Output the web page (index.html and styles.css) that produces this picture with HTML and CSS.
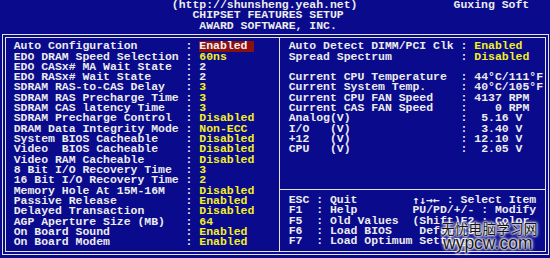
FILE: index.html
```html
<!DOCTYPE html>
<html lang="en">
<head>
    <meta charset="UTF-8">
    <title>Chipset Features Setup</title>
    <link rel="stylesheet" href="styles.css">
</head>
<body>

<div class="screen">

    <!-- Title lines -->
    <div class="header">
        <div class="line"><span class="url">(http://shunsheng.yeah.net)</span><span class="brand">Guxing Soft</span></div>
        <div class="line title">CHIPSET FEATURES SETUP</div>
        <div class="line vendor">AWARD SOFTWARE, INC.</div>
    </div>

    <!-- Double frame -->
    <div class="frame">
        <div class="box">

            <!-- Left column: chipset options -->
            <div class="panel left">
                <div class="row"><span>Auto Configuration</span><span>:</span><span class="sel">Enabled</span></div>
                <div class="row"><span>EDO DRAM Speed Selection</span><span>:</span><span class="val">60ns</span></div>
                <div class="row"><span>EDO CASx# MA Wait State</span><span>:</span><span>2</span></div>
                <div class="row"><span>EDO RASx# Wait State</span><span>:</span><span>2</span></div>
                <div class="row"><span>SDRAM RAS-to-CAS Delay</span><span>:</span><span class="val">3</span></div>
                <div class="row"><span>SDRAM RAS Precharge Time</span><span>:</span><span class="val">3</span></div>
                <div class="row"><span>SDRAM CAS latency Time</span><span>:</span><span class="val">3</span></div>
                <div class="row"><span>SDRAM Precharge Control</span><span>:</span><span class="val">Disabled</span></div>
                <div class="row"><span>DRAM Data Integrity Mode</span><span>:</span><span class="val">Non-ECC</span></div>
                <div class="row"><span>System BIOS Cacheable</span><span>:</span><span class="val">Disabled</span></div>
                <div class="row"><span>Video  BIOS Cacheable</span><span>:</span><span class="val">Disabled</span></div>
                <div class="row"><span>Video RAM Cacheable</span><span>:</span><span class="val">Disabled</span></div>
                <div class="row"><span>8 Bit I/O Recovery Time</span><span>:</span><span class="val">3</span></div>
                <div class="row"><span>16 Bit I/O Recovery Time</span><span>:</span><span class="val">2</span></div>
                <div class="row"><span>Memory Hole At 15M-16M</span><span>:</span><span class="val">Disabled</span></div>
                <div class="row"><span>Passive Release</span><span>:</span><span class="val">Enabled</span></div>
                <div class="row"><span>Delayed Transaction</span><span>:</span><span class="val">Disabled</span></div>
                <div class="row"><span>AGP Aperture Size (MB)</span><span>:</span><span class="val">64</span></div>
                <div class="row"><span>On Board Sound</span><span>:</span><span class="val">Enabled</span></div>
                <div class="row"><span>On Board Modem</span><span>:</span><span class="val">Enabled</span></div>
            </div>

            <!-- Right column: clock, health, help -->
            <div class="panel right">
                <div class="upper">
                    <div class="row"><span>Auto Detect DIMM/PCI Clk</span><span>:</span><span class="val">Enabled</span></div>
                    <div class="row"><span>Spread Spectrum</span><span>:</span><span class="val">Disabled</span></div>
                    <div class="row"></div>
                    <div class="row"><span>Current CPU Temperature</span><span>:</span><span>44°C/111°F</span></div>
                    <div class="row"><span>Current System Temp.</span><span>:</span><span>40°C/105°F</span></div>
                    <div class="row"><span>Current CPU FAN Speed</span><span>:</span><span>4137 RPM</span></div>
                    <div class="row"><span>Current CAS FAN Speed</span><span>:</span><span>   0 RPM</span></div>
                    <div class="row"><span>Analog(V)</span><span>:</span><span> 5.16 V</span></div>
                    <div class="row"><span>I/O   (V)</span><span>:</span><span> 3.40 V</span></div>
                    <div class="row"><span>+12   (V)</span><span>:</span><span>12.10 V</span></div>
                    <div class="row"><span>CPU   (V)</span><span>:</span><span> 2.05 V</span></div>
                </div>
                <div class="help">
                    <div class="line">ESC : Quit        <span class="arrows">↑↓→←</span> : Select Item</div>
                    <div class="line">F1  : Help        PU/PD/+/- : Modify</div>
                    <div class="line">F5  : Old Values  (Shift)F2 : Color</div>
                    <div class="line">F6  : Load BIOS    Defaults</div>
                    <div class="line">F7  : Load Optimum Settings</div>
                </div>
            </div>

        </div>
    </div>

    <!-- Site watermark over the corner -->
    <div class="watermark">
        <div class="wm-cn">无忧电脑学习网</div>
        <div class="wm-en">wypcw.com</div>
    </div>
</div>

</body>
</html>
```

FILE: styles.css
```css
/* Text mode screen: 80 x 25 cells of 6.875 x 10.32 px */
body {
    margin: 0;
    background: #0a0a8c;
    overflow: hidden;
}

.screen {
    position: relative;
    width: 550px;
    height: 258px;
    font-family: "Liberation Mono", "DejaVu Sans Mono", monospace;
    font-size: 11.46px;
    line-height: 10.32px;
    font-weight: bold;
    color: #ececec;
}

.line {
    height: 10.32px;
    white-space: pre;
}

/* Header */
.url {
    margin-left: 25ch;
}

.brand {
    margin-left: 14ch;
}

.title {
    padding-left: 28ch;
}

.vendor {
    padding-left: 29ch;
}

/* Frame */
.frame {
    margin: 3px 0 0 2px;
    width: 547px;
    box-sizing: border-box;
    border: 1px solid #e4e4e4;
    padding: 2px;
}

.box {
    display: flex;
    height: 213px;
    border: 1px solid #e4e4e4;
}

.panel {
    box-sizing: border-box;
    padding-top: 3.3px;
}

.left {
    width: 273px;
    padding-left: 7.75px;
}

.right {
    flex: 1;
    border-left: 1px solid #e4e4e4;
    padding-top: 0;
}

.upper {
    height: 152px;
    box-sizing: border-box;
    padding: 3.3px 0 0 8.75px;
    border-bottom: 1px solid #e4e4e4;
}

.help {
    padding: 5px 0 0 8.75px;
}

.arrows {
    display: inline-block;
    width: 27.5px;
    overflow: hidden;
    vertical-align: top;
    font-family: "DejaVu Sans Mono", monospace;
    font-size: 11.4px;
}

/* Option rows */
.row {
    display: grid;
    grid-template-columns: 25ch 2ch auto;
    height: 10.32px;
    white-space: pre;
}

.val {
    color: #f4f020;
}

.sel {
    display: inline-block;
    width: 8ch;
    background: #8c1010;
    color: #f4f0f0;
}

/* Watermark */
.watermark {
    position: absolute;
    left: 441px;
    top: 221px;
    color: #161616;
    text-shadow: 0 0 2px #fff, 0 0 2px #fff, 0 0 3px #fff, 0 0 4px #fff;
    font-weight: normal;
}

.wm-cn {
    font-family: "Noto Sans CJK SC", sans-serif;
    font-size: 13.8px;
    line-height: 15px;
}

.wm-en {
    font-family: "Liberation Sans", sans-serif;
    font-size: 17.5px;
    line-height: 14px;
    margin-left: 2px;
}
```
